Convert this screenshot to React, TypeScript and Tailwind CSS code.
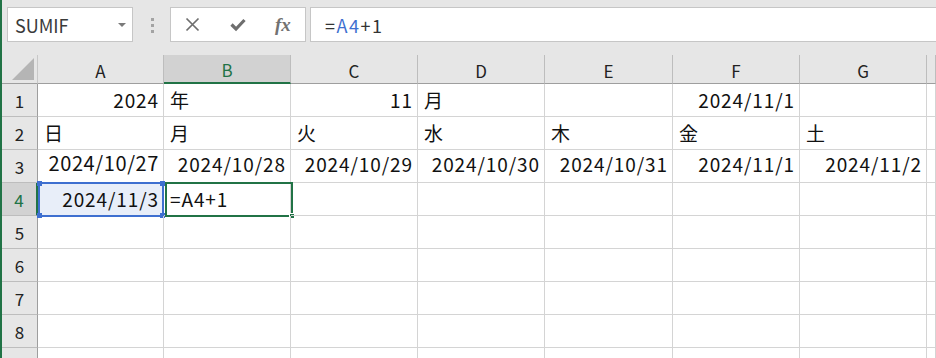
import React from "react";

const JP = "font-['Noto_Sans_CJK_JP',_'Noto_Sans',_sans-serif]";

const COLS = ["A", "B", "C", "D", "E", "F", "G", ""];

type Cell = { t?: string; r?: boolean; big?: boolean };

const empty = (): Cell[] => [{}, {}, {}, {}, {}, {}, {}, {}];

const rows: Cell[][] = [
  [{ t: "2024", r: true }, { t: "年" }, { t: "11", r: true }, { t: "月" }, {}, { t: "2024/11/1", r: true }, {}, {}],
  [{ t: "日" }, { t: "月" }, { t: "火" }, { t: "水" }, { t: "木" }, { t: "金" }, { t: "土" }, {}],
  [
    { t: "2024/10/27", r: true, big: true },
    { t: "2024/10/28", r: true },
    { t: "2024/10/29", r: true },
    { t: "2024/10/30", r: true },
    { t: "2024/10/31", r: true },
    { t: "2024/11/1", r: true },
    { t: "2024/11/2", r: true },
    {},
  ],
  [{ t: "2024/11/3", r: true }, { t: "=A4+1" }, {}, {}, {}, {}, {}, {}],
  empty(),
  empty(),
  empty(),
  empty(),
  empty(),
];

const Toolbar = () => (
  <div className="flex h-[55px] items-start pt-[7px]">
    {/* name box */}
    <div className="ml-[5px] flex h-[35px] w-[126px] items-center justify-between border border-[#c6c6c6] bg-white pl-[7px] pr-[6px]">
      <span className={`${JP} text-[18px] leading-none text-[#3a3a3a]`}>SUMIF</span>
      <span className="mt-[1px] h-0 w-0 border-x-[4px] border-t-[4px] border-x-transparent border-t-[#7a7a7a]" />
    </div>
    {/* grip dots */}
    <div className="ml-[18px] mt-[11px] flex flex-col gap-[3px]">
      <span className="h-[3px] w-[3px] bg-[#a3a3a3]" />
      <span className="h-[3px] w-[3px] bg-[#a3a3a3]" />
      <span className="h-[3px] w-[3px] bg-[#a3a3a3]" />
    </div>
    {/* cancel / enter / fx */}
    <div className="ml-[16px] flex h-[35px] w-[136px] items-center border border-[#c6c6c6] bg-white">
      <svg className="ml-[14px]" width="15" height="15" viewBox="0 0 15 15">
        <path d="M1.5 1.5 L13.5 13.5 M13.5 1.5 L1.5 13.5" stroke="#6e6e6e" strokeWidth="1.7" />
      </svg>
      <svg className="ml-[30px]" width="16" height="14" viewBox="0 0 16 14">
        <path d="M1.5 6.5 L6 11 L14.5 2" fill="none" stroke="#6e6e6e" strokeWidth="3.2" />
      </svg>
      <span className="ml-[29px] font-['Liberation_Serif',_serif] text-[19px] font-bold italic leading-none text-[#727272]">
        fx
      </span>
    </div>
    {/* formula input */}
    <div className="ml-[4px] flex h-[35px] flex-1 items-center border border-r-0 border-[#c6c6c6] bg-white pl-[14px]">
      <span className={`${JP} text-[18px] leading-none tracking-[1.5px] text-[#333]`}>
        =<span className="text-[#3e6fd0]">A4</span>+1
      </span>
    </div>
  </div>
);

const Header = () => (
  <>
    <div className="relative border-b border-r border-b-[#9e9e9e] border-r-[#c8c8c8] bg-[#e6e6e6]">
      <svg className="absolute bottom-[3px] right-[3px]" width="22" height="22" viewBox="0 0 22 22">
        <path d="M22 0 L22 22 L0 22 Z" fill="#b5b5b5" />
      </svg>
    </div>
    {COLS.map((c, i) => {
      const sel = c === "B";
      return (
        <div
          key={i}
          className={`${JP} flex items-center justify-center border-r border-r-[#bdbdbd] pt-[2px] text-[17px] leading-none ${
            sel
              ? "border-b-2 border-b-[#217346] bg-[#d2d2d2] text-[#217346]"
              : "border-b border-b-[#9e9e9e] bg-[#e6e6e6] text-[#222]"
          }`}
        >
          {c}
        </div>
      );
    })}
  </>
);

export default function App() {
  return (
    <div className="h-[358px] w-[936px] overflow-hidden border-l-2 border-[#217346] bg-[#e6e6e6]">
      <Toolbar />
      <div className="grid grid-cols-[36px_126px_127px_127px_127px_128px_127px_127px_1fr] grid-rows-[29px_33px_33px_33px_33px_33px_33px_33px_33px_33px] bg-white">
        <Header />
        {rows.map((row, ri) => {
          const rsel = ri === 3;
          const label = ri < 8 ? String(ri + 1) : "";
          return (
            <React.Fragment key={ri}>
              <div
                className={`${JP} flex items-center justify-center border-b text-[17px] leading-none ${
                  rsel
                    ? "border-r-2 border-b-[#bdbdbd] border-r-[#217346] bg-[#d2d2d2] text-[#217346]"
                    : "border-r border-b-[#bdbdbd] border-r-[#9e9e9e] bg-[#e6e6e6] text-[#222]"
                }`}
              >
                {label}
              </div>
              {row.map((cell, ci) => {
                const isA4 = rsel && ci === 0;
                const isB4 = rsel && ci === 1;
                return (
                  <div
                    key={ci}
                    className={`${JP} relative flex items-end whitespace-nowrap border-b border-r border-[#d4d4d4] leading-none text-[#111] ${
                      ri === 2 ? "pb-[9px]" : "pb-[7px]"
                    } ${cell.r ? "justify-end pr-[4px]" : "justify-start pl-[6px]"} ${
                      cell.big ? "text-[20px] tracking-[0.6px]" : "text-[19px] tracking-[0.9px]"
                    } ${isA4 ? "bg-[#e8eef9]" : ""}`}
                  >
                    {cell.t}
                    {isA4 && (
                      <div className="absolute -top-[1px] left-0 h-[35px] w-[126px] border-2 border-[#3e6fd0]">
                        <span className="absolute -left-[3px] -top-[3px] h-[5px] w-[5px] bg-[#3e6fd0]" />
                        <span className="absolute -right-[3px] -top-[3px] h-[5px] w-[5px] bg-[#3e6fd0]" />
                        <span className="absolute -bottom-[3px] -left-[3px] h-[5px] w-[5px] bg-[#3e6fd0]" />
                        <span className="absolute -bottom-[3px] -right-[3px] h-[5px] w-[5px] bg-[#3e6fd0]" />
                      </div>
                    )}
                    {isB4 && (
                      <div className="absolute -top-[1px] left-[1px] h-[35px] w-[128px] border-2 border-[#217346]">
                        <span className="absolute -bottom-[4px] -right-[4px] h-[6px] w-[6px] border border-white bg-[#217346]" />
                      </div>
                    )}
                  </div>
                );
              })}
            </React.Fragment>
          );
        })}
      </div>
    </div>
  );
}
